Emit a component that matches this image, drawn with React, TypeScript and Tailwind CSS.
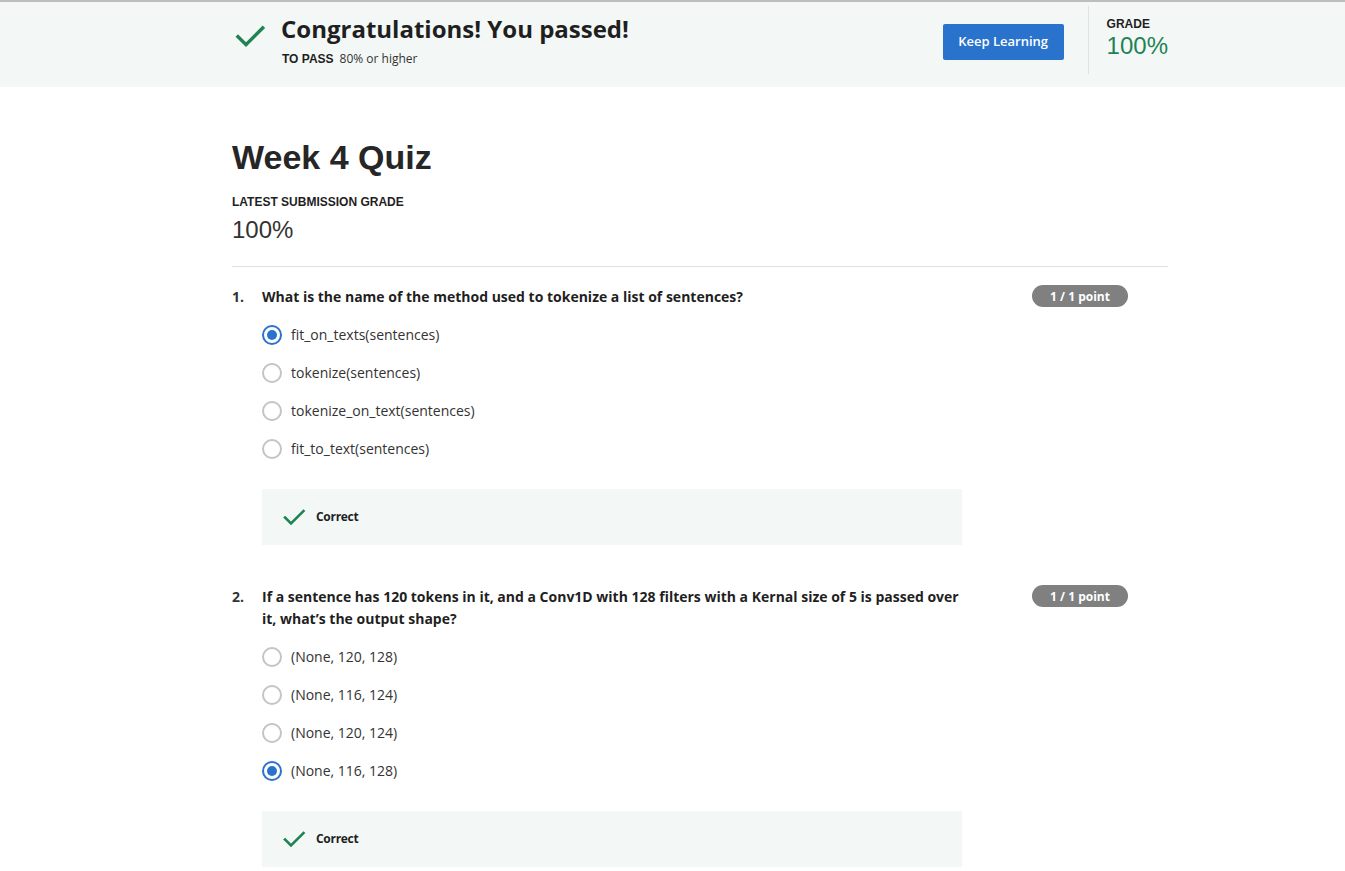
import React from "react";

const Check = ({ className }: { className?: string }) => (
  <svg viewBox="0 0 24 24" className={className} fill="none" stroke="#1f8354" strokeWidth={2.6} strokeLinecap="square">
    <path d="M3 12.5 L9 18.5 L21.5 6" />
  </svg>
);

const Radio = ({ checked }: { checked?: boolean }) =>
  checked ? (
    <span className="flex h-[20px] w-[20px] items-center justify-center rounded-full border-[2.5px] border-[#2a73cc] bg-white">
      <span className="h-[10px] w-[10px] rounded-full bg-[#2a73cc]" />
    </span>
  ) : (
    <span className="h-[20px] w-[20px] rounded-full border-[2px] border-[#c4c4c4] bg-white" />
  );

type Q = { n: number; text: React.ReactNode; options: string[]; sel: number };

const questions: Q[] = [
  {
    n: 1,
    text: "What is the name of the method used to tokenize a list of sentences?",
    options: ["fit_on_texts(sentences)", "tokenize(sentences)", "tokenize_on_text(sentences)", "fit_to_text(sentences)"],
    sel: 0,
  },
  {
    n: 2,
    text: "If a sentence has 120 tokens in it, and a Conv1D with 128 filters with a Kernal size of 5 is passed over it, what’s the output shape?",
    options: ["(None, 120, 128)", "(None, 116, 124)", "(None, 120, 124)", "(None, 116, 128)"],
    sel: 3,
  },
];

export default function App() {
  return (
    <div className="min-h-screen bg-white text-[#333] font-['Open_Sans',sans-serif]">
      <div className="border-t-[2px] border-[#bdbdbd] bg-[#f3f8f6]">
        <div className="ml-[232px] flex h-[85px] w-[936px] items-start">
          <div className="flex flex-1 items-start pt-[12px]">
            <Check className="ml-[2px] mt-[6px] h-[32px] w-[32px]" />
            <div className="ml-[15px]">
              <div className="text-[24px] font-bold leading-[30px] text-[#1f1f1f]">Congratulations! You passed!</div>
              <div className="mt-[7px] pl-[1px] text-[12px] leading-[16px]">
                <span className="font-['Liberation_Sans',Arial,sans-serif] font-bold text-[#1f1f1f]">TO PASS</span>
                <span className="ml-[6px]">80% or higher</span>
              </div>
            </div>
          </div>
          <button className="mt-[22px] h-[36px] w-[121px] rounded-[2px] bg-[#2a73cc] text-[13px] font-semibold text-white">
            Keep Learning
          </button>
          <div className="ml-[24px] mt-[4px] h-[68px] border-l border-[#dfe3e1]" />
          <div className="ml-[18px] pt-[14px] font-['Liberation_Sans',Arial,sans-serif]">
            <div className="text-[12px] font-bold leading-[16px] text-[#1f1f1f]">GRADE</div>
            <div className="text-[24px] leading-[28px] text-[#1f8354]">100%</div>
          </div>
        </div>
      </div>

      <div className="ml-[232px] w-[936px]">
        <h1 className="mt-[50px] font-['Liberation_Sans',Arial,sans-serif] text-[34px] font-bold leading-[40px] text-[#262626]">
          Week 4 Quiz
        </h1>
        <div className="mt-[17px] font-['Liberation_Sans',Arial,sans-serif] text-[12px] font-bold leading-[16px] text-[#1f1f1f]">
          LATEST SUBMISSION GRADE
        </div>
        <div className="mt-[5px] font-['Liberation_Sans',Arial,sans-serif] text-[24px] leading-[30px] text-[#333]">100%</div>
        <div className="mt-[21px] border-t border-[#e0e0e0]" />

        {questions.map((q, qi) => (
          <div key={q.n} className={qi === 0 ? "mt-[19px]" : "mt-[41px]"}>
            <div className="flex items-start">
              <div className="w-[30px] text-[14px] font-bold leading-[22px]">{q.n}.</div>
              <div className="w-[700px] text-[14px] font-bold leading-[22px] text-[#1f1f1f]">{q.text}</div>
              <div className="ml-[70px] mt-[-1px] flex h-[22px] w-[96px] items-center justify-center rounded-full bg-[#808080] pt-[2px] text-[12px] font-bold text-white">
                1 / 1 point
              </div>
            </div>
            <div className="ml-[30px] mt-[17px] flex flex-col gap-[18px]">
              {q.options.map((o, i) => (
                <div key={o} className="flex h-[20px] items-center">
                  <Radio checked={i === q.sel} />
                  <span className="ml-[9px] text-[14px] leading-[20px]">{o}</span>
                </div>
              ))}
            </div>
            <div className="ml-[30px] mt-[30px] flex h-[56px] w-[700px] items-center bg-[#f3f8f6] pl-[20px]">
              <Check className="h-[24px] w-[24px]" />
              <span className="ml-[10px] text-[12px] font-bold tracking-[-0.3px] text-[#1f1f1f]">Correct</span>
            </div>
          </div>
        ))}
      </div>
    </div>
  );
}
